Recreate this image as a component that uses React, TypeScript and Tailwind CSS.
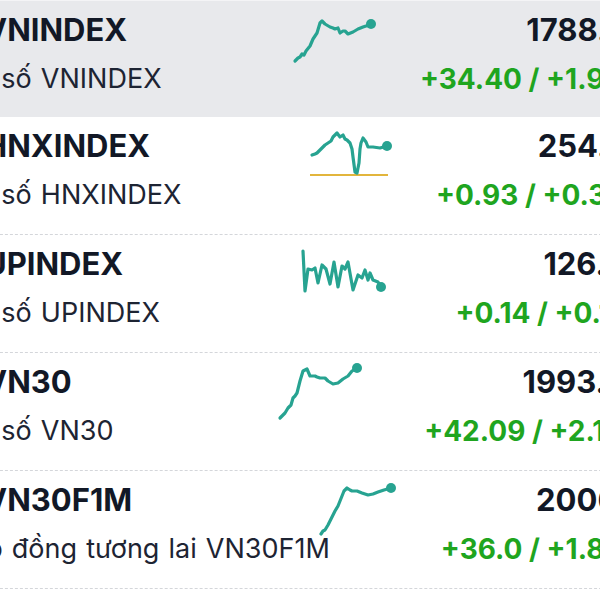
import React from "react";

type Row = {
  code: string;
  name: string;
  value: string;
  change: string;
  points: [number, number][];
  baseline?: number;
  active?: boolean;
};

// toạ độ sparkline tính trong khung 130x80 của mỗi dòng
const rows: Row[] = [
  {
    code: "VNINDEX",
    name: "Chỉ số VNINDEX",
    value: "1788.29",
    change: "+34.40 / +1.96%",
    active: true,
    points: [
      [25, 60], [28, 57], [30, 56], [32, 53], [34, 54], [36, 50], [40, 45], [43, 38], [47, 32], [50, 22],
      [52, 20], [55, 23], [60, 26], [63, 27], [65, 28], [68, 27], [70, 32], [73, 30], [75, 30], [78, 33],
      [83, 31], [88, 28], [93, 26], [96, 25], [101, 23],
    ],
  },
  {
    code: "HNXINDEX",
    name: "Chỉ số HNXINDEX",
    value: "254.56",
    change: "+0.93 / +0.37%",
    baseline: 58,
    points: [
      [42, 38], [45, 37], [47, 36], [50, 33], [52, 31], [55, 28], [58, 26], [61, 24], [63, 20], [67, 16],
      [70, 20], [73, 18], [75, 22], [77, 23], [80, 26], [82, 32], [83, 40], [85, 55], [87, 56], [89, 46],
      [90, 32], [91, 26], [93, 21], [96, 25], [98, 30], [103, 30], [110, 31], [117, 29],
    ],
  },
  {
    code: "UPINDEX",
    name: "Chỉ số UPINDEX",
    value: "126.48",
    change: "+0.14 / +0.11%",
    points: [
      [33, 16], [35, 56], [38, 34], [42, 35], [45, 33], [48, 48], [52, 30], [56, 34], [60, 49],
      [64, 27], [68, 52], [72, 31], [75, 34], [78, 27], [83, 55], [88, 40], [92, 43], [95, 35], [98, 45],
      [100, 38], [103, 45], [108, 47], [111, 52],
    ],
  },
  {
    code: "VN30",
    name: "Chỉ số VN30",
    value: "1993.48",
    change: "+42.09 / +2.16%",
    points: [
      [10, 65], [13, 62], [15, 60], [18, 55], [21, 52], [23, 45], [25, 43], [27, 40], [30, 28], [33, 18],
      [37, 16], [40, 23], [45, 23], [47, 24], [50, 25], [55, 25], [58, 28], [63, 31], [68, 30], [73, 26],
      [78, 23], [82, 18], [87, 15],
    ],
  },
  {
    code: "VN30F1M",
    name: "Hợp đồng tương lai VN30F1M",
    value: "2006.0",
    change: "+36.0 / +1.83%",
    points: [
      [51, 63], [53, 60], [55, 59], [58, 54], [60, 50], [63, 44], [65, 40], [68, 35], [70, 30], [72, 25],
      [74, 20], [77, 17], [80, 19], [82, 20], [87, 20], [92, 22], [95, 23], [98, 24], [103, 23], [108, 21],
      [114, 19], [121, 17],
    ],
  },
];

function Sparkline({ points, baseline }: { points: [number, number][]; baseline?: number }) {
  const d = points.map(([x, y], i) => `${i ? "L" : "M"}${x} ${y}`).join(" ");
  const [lx, ly] = points[points.length - 1];
  return (
    <svg width="130" height="80" viewBox="0 0 130 80" className="block">
      {baseline !== undefined && (
        <line x1="40" y1={baseline} x2="118" y2={baseline} stroke="#e2b53c" strokeWidth="2" />
      )}
      <path d={d} fill="none" stroke="#27a391" strokeWidth="3.2" strokeLinejoin="round" strokeLinecap="round" />
      <circle cx={lx} cy={ly} r="5" fill="#27a391" />
    </svg>
  );
}

export default function App() {
  return (
    <div className="w-[600px] h-[600px] overflow-hidden bg-white font-['Inter',sans-serif]">
      <div className="w-[697px] -ml-[50px] flex flex-col">
        {rows.map((r) => (
          <div
            key={r.code}
            className={`grid grid-cols-[320px_130px_1fr] ${
              r.active ? "h-[117px] bg-[#e8e9ec] border-t border-[#f4f4f6]" : "h-[118px] border-b border-dashed border-[#d4d6da]"
            }`}
          >
            <div className="flex flex-col pt-[11px]">
              <div className="ml-[34px] text-[31px] leading-[36px] font-bold text-[#121826] whitespace-nowrap">
                {r.code}
              </div>
              <div className="mt-[15px] text-[27px] leading-[32px] [word-spacing:1.5px] text-[#1d2433] whitespace-nowrap">
                {r.name}
              </div>
            </div>
            <div>
              <Sparkline points={r.points} baseline={r.baseline} />
            </div>
            <div className="flex flex-col items-end pt-[11px]">
              <div className="text-[31px] leading-[36px] font-bold text-[#121826] whitespace-nowrap">{r.value}</div>
              <div className="mt-[15px] -mr-[4px] text-[28px] leading-[32px] font-bold text-[#1fa51f] whitespace-nowrap">
                {r.change}
              </div>
            </div>
          </div>
        ))}
      </div>
    </div>
  );
}
